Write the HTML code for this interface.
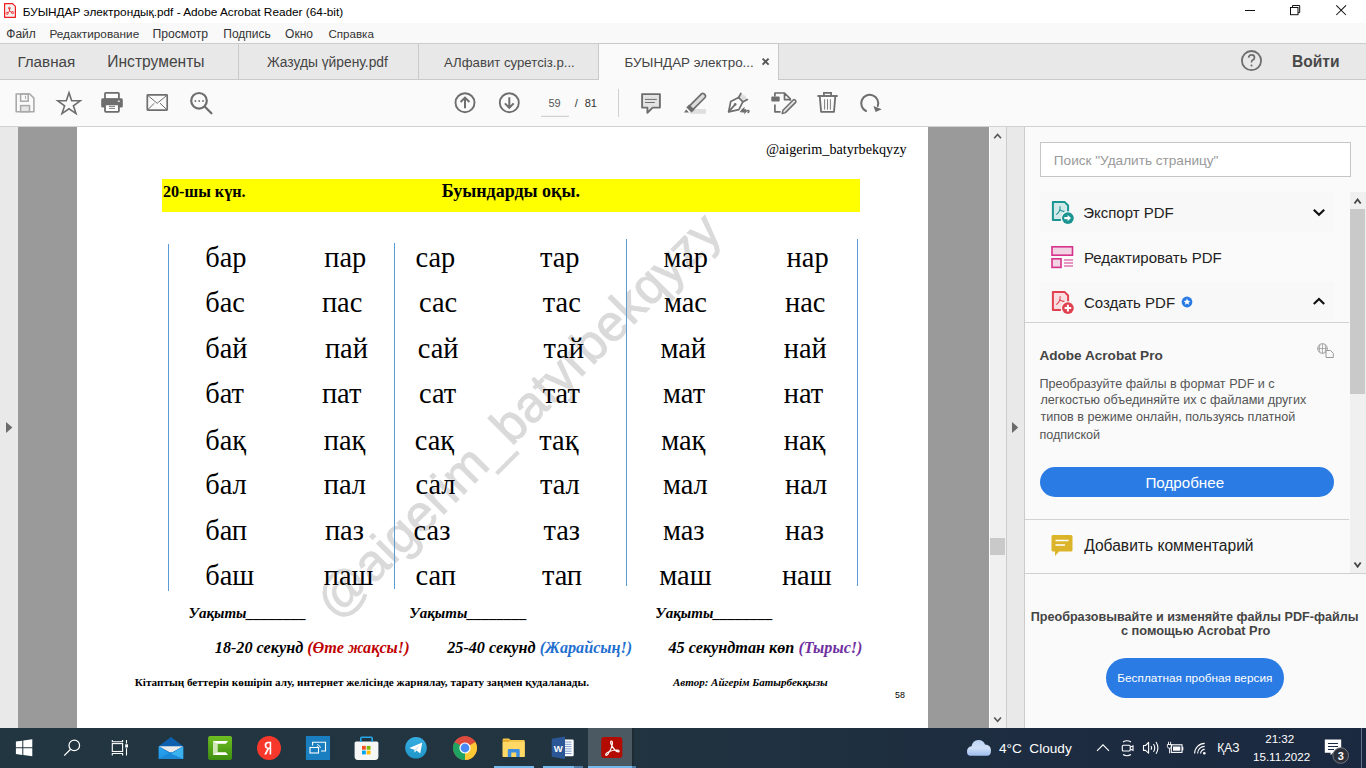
<!DOCTYPE html>
<html><head><meta charset="utf-8">
<style>
*{margin:0;padding:0;box-sizing:border-box}
html,body{width:1366px;height:768px;overflow:hidden;background:#fff;font-family:"Liberation Sans",sans-serif}
.a{position:absolute;white-space:nowrap}
svg{position:absolute;overflow:visible}
</style></head><body>
<!-- bars -->
<div class="a" style="left:0;top:0;width:1366px;height:23px;background:#fff"></div>
<div class="a" style="left:0;top:23px;width:1366px;height:20px;background:#f9f9f9"></div>
<div class="a" style="left:0;top:43px;width:1366px;height:1px;background:#cdcdcd"></div>
<div class="a" style="left:0;top:44px;width:1366px;height:35px;background:#e8e8e8"></div>
<div class="a" style="left:0;top:79px;width:1366px;height:1px;background:#c9c9c9"></div>
<div class="a" style="left:0;top:80px;width:1366px;height:46px;background:#fafafa"></div>
<div class="a" style="left:0;top:126px;width:1366px;height:1px;background:#d2d2d2"></div>
<!-- tab separators / active tab -->
<div class="a" style="left:238px;top:44px;width:1px;height:35px;background:#cacaca"></div>
<div class="a" style="left:418px;top:44px;width:1px;height:35px;background:#cacaca"></div>
<div class="a" style="left:598px;top:43px;width:181px;height:37px;background:#fafafa;border-left:1px solid #c9c9c9;border-right:1px solid #c9c9c9;border-top:1px solid #c9c9c9"></div>
<!-- doc area -->
<div class="a" style="left:0;top:127px;width:18px;height:601px;background:#e9e9e9"></div>
<div class="a" style="left:18px;top:127px;width:971px;height:601px;background:#9a9a9a"></div>
<div class="a" style="left:77px;top:127px;width:851px;height:601px;background:#fff"></div>
<div class="a" style="left:989px;top:127px;width:1px;height:601px;background:#fff"></div>
<div class="a" style="left:990px;top:127px;width:16px;height:601px;background:#f0f0f0"></div>
<div class="a" style="left:1006px;top:127px;width:1px;height:601px;background:#cbcbcb"></div>
<div class="a" style="left:1007px;top:127px;width:17px;height:601px;background:#e9e9e9"></div>
<div class="a" style="left:1024px;top:127px;width:1px;height:601px;background:#cbcbcb"></div>
<div class="a" style="left:1025px;top:127px;width:341px;height:601px;background:#fafafa"></div>
<div class="a" style="left:990px;top:538px;width:15px;height:17px;background:#c9c9c9"></div>
<svg style="left:0;top:0" width="1366" height="768">
 <path d="M6 422 L12.4 427.5 L6 433 Z" fill="#6b6b6b"/>
 <path d="M1012 422 L1018.2 427.5 L1012 433 Z" fill="#6b6b6b"/>
 <path d="M994.2 138.3 L997.6 134.5 L1001 138.3" fill="none" stroke="#555" stroke-width="1.6"/>
 <path d="M994.2 717.5 L997.6 721.3 L1001 717.5" fill="none" stroke="#555" stroke-width="1.6"/>
</svg>
<!-- panel -->
<div class="a" style="left:1040px;top:142px;width:311px;height:35px;background:#fff;border:1px solid #c6c6c6"></div>
<div class="a" style="left:1040px;top:192px;width:294px;height:40px;background:#f8f8f8"></div>
<div class="a" style="left:1040px;top:282px;width:294px;height:38px;background:#f8f8f8"></div>
<div class="a" style="left:1350px;top:192px;width:16px;height:381px;background:#f0f0f0"></div>
<div class="a" style="left:1350px;top:209px;width:15px;height:185px;background:#c9c9c9"></div>
<div class="a" style="left:1025px;top:322px;width:324px;height:1px;background:#d2d2d2"></div>
<div class="a" style="left:1025px;top:519px;width:324px;height:1px;background:#d2d2d2"></div>
<div class="a" style="left:1025px;top:573px;width:341px;height:1px;background:#cfcfcf"></div>
<div class="a" style="left:1040px;top:467px;width:294px;height:30px;background:#2b7be4;border-radius:15px"></div>
<div class="a" style="left:1106px;top:658px;width:178px;height:40px;background:#2b7be4;border-radius:20px"></div>
<svg style="left:0;top:0" width="1366" height="768">
 <path d="M1354.5 203.5 L1357.6 199.5 L1360.7 203.5" fill="none" stroke="#444" stroke-width="1.8"/>
 <path d="M1354.5 562.5 L1357.6 566.8 L1360.7 562.5" fill="none" stroke="#444" stroke-width="1.8"/>
 <path d="M1313.8 209.8 L1319 214.8 L1324.2 209.8" fill="none" stroke="#111" stroke-width="2.2"/>
 <path d="M1313.8 304 L1319 299 L1324.2 304" fill="none" stroke="#111" stroke-width="2.2"/>
 <!-- export icon -->
 <path d="M1052.9 201.9 H1064.5 L1068.1 205.5 V220 H1052.9 Z" fill="#d2e8e9"/><path d="M1068.1 212 V205.5 L1064.5 201.9 H1052.9 V220 H1060.9" fill="none" stroke="#1b9592" stroke-width="2" stroke-linejoin="round"/>
 <path d="M1060.1 206.2 Q1060.5 210 1058.8 212 Q1057.8 213.5 1056.3 214.6 M1060.4 210.2 Q1062 211.6 1064.4 211.4" fill="none" stroke="#1b9592" stroke-width="1.1"/>
 <circle cx="1067.9" cy="218.1" r="6.8" fill="#fafafa"/>
 <circle cx="1067.9" cy="218.1" r="5.9" fill="#1b9592"/>
 <path d="M1064.3 218.1 H1068.4" stroke="#fff" stroke-width="2.2"/>
 <path d="M1067.6 214.9 L1071 218.1 L1067.6 221.3 Z" fill="#fff"/>
 <!-- edit icon -->
 <rect x="1052" y="246.8" width="20.5" height="8.4" fill="#f2d3e3" stroke="#d6318b" stroke-width="1.6"/>
 <rect x="1052" y="258.8" width="9" height="8.6" fill="#f2d3e3" stroke="#d6318b" stroke-width="1.6"/>
 <path d="M1064 260 H1073 M1064 263 H1073 M1064 266 H1073" stroke="#d6318b" stroke-width="1"/>
 <!-- create icon -->
 <path d="M1052.9 291.9 H1064.5 L1068.1 295.5 V310 H1052.9 Z" fill="#f9dde0"/><path d="M1068.1 302 V295.5 L1064.5 291.9 H1052.9 V310 H1060.9" fill="none" stroke="#e0414e" stroke-width="2" stroke-linejoin="round"/>
 <path d="M1060.1 296.2 Q1060.5 300 1058.8 302 Q1057.8 303.5 1056.3 304.6 M1060.4 300.2 Q1062 301.6 1064.4 301.4" fill="none" stroke="#e0414e" stroke-width="1.1"/>
 <circle cx="1067.9" cy="308.1" r="6.8" fill="#fafafa"/>
 <circle cx="1067.9" cy="308.1" r="5.9" fill="#e0414e"/>
 <path d="M1064.6 308.1 H1071.2 M1067.9 304.8 V311.4" stroke="#fff" stroke-width="2"/>
 <circle cx="1187" cy="302" r="5.4" fill="#2b7be4"/>
 <path d="M1187 298.6 L1188 300.8 L1190.3 301 L1188.6 302.5 L1189.1 304.8 L1187 303.6 L1184.9 304.8 L1185.4 302.5 L1183.7 301 L1186 300.8 Z" fill="#fff"/>
 <!-- globe doc icon -->
 <circle cx="1322.5" cy="348.5" r="4.8" fill="none" stroke="#9a9a9a" stroke-width="1"/>
 <path d="M1317.7 348.5 H1327.3 M1322.5 343.7 V353.3 M1320 344.5 Q1318.5 348.5 1320 352.5 M1325 344.5 Q1326.5 348.5 1325 352.5" fill="none" stroke="#9a9a9a" stroke-width="0.8"/>
 <path d="M1326 350.5 H1330.5 L1333.3 353.3 V357.5 H1326 Z" fill="#fafafa" stroke="#9a9a9a" stroke-width="1"/>
 <!-- comment icon -->
 <path d="M1051.5 536.5 Q1051.5 535 1053 535 H1071 Q1072.5 535 1072.5 536.5 V550 Q1072.5 551.5 1071 551.5 H1059 L1055 556 V551.5 H1053 Q1051.5 551.5 1051.5 550 Z" fill="#dcb42a"/>
 <path d="M1055.5 540.5 H1068.5 M1055.5 545 H1065" stroke="#fff" stroke-width="1.4"/>
</svg>
<svg style="left:0;top:0" width="1366" height="130">
 <!-- title icon -->
 <path d="M4.6 3.6 H12.6 L15.4 6.4 V17.3 H4.6 Z" fill="#f3f3f3" stroke="#f01e1e" stroke-width="1.2" stroke-linejoin="round"/>
 <path d="M9.4 8.2 L9.6 11.2 M9.6 11.2 L7.4 13 M9.6 11.2 L12.5 12.6" stroke="#f01e1e" stroke-width="0.9" fill="none"/>
 <circle cx="9.4" cy="8.2" r="1" fill="none" stroke="#f01e1e" stroke-width="0.8"/>
 <circle cx="7.2" cy="13.3" r="1.1" fill="none" stroke="#f01e1e" stroke-width="0.8"/>
 <circle cx="12.6" cy="12.6" r="1.1" fill="none" stroke="#f01e1e" stroke-width="0.8"/>
 <!-- window controls -->
 <path d="M1245 10.5 H1255" stroke="#111" stroke-width="1"/>
 <rect x="1290.5" y="7.5" width="7.5" height="7.2" fill="none" stroke="#111" stroke-width="1"/>
 <path d="M1292.5 7.5 V5.5 H1299.7 V12.6 H1298" fill="none" stroke="#111" stroke-width="1"/>
 <path d="M1336.3 5.3 L1346 15 M1346 5.3 L1336.3 15" stroke="#111" stroke-width="1.05"/>
 <!-- help -->
 <circle cx="1251.5" cy="60.6" r="9.6" fill="none" stroke="#6e6e6e" stroke-width="1.8"/>
 <path d="M1248.6 57.8 Q1248.8 54.8 1251.6 54.8 Q1254.5 54.8 1254.5 57.4 Q1254.5 59.2 1252.6 60 Q1251.5 60.6 1251.5 62.4" fill="none" stroke="#6e6e6e" stroke-width="1.7"/>
 <circle cx="1251.5" cy="65.5" r="1.05" fill="#6e6e6e"/>
 <!-- tab close -->
 <path d="M762.6 58.6 L768.6 64.6 M768.6 58.6 L762.6 64.6" stroke="#555" stroke-width="1.9"/>
 <!-- save -->
 <path d="M16.2 94 H29.8 L33.9 98.1 V111.7 H16.2 Z" fill="none" stroke="#a9a9a9" stroke-width="1.6" stroke-linejoin="round"/>
 <rect x="20.6" y="94" width="7.6" height="7.2" fill="none" stroke="#a9a9a9" stroke-width="1.5"/>
 <path d="M25.5 95.8 V98.8" stroke="#a9a9a9" stroke-width="1.1"/>
 <rect x="20.6" y="105.6" width="8.9" height="6.1" fill="#e6e6e6" stroke="#a9a9a9" stroke-width="1.5"/>
 <!-- star -->
 <path d="M69 92.8 L71.7 100.8 L80.2 100.8 L73.4 105.8 L76 113.6 L69 108.8 L62 113.6 L64.6 105.8 L57.8 100.8 L66.3 100.8 Z" fill="none" stroke="#6e6e6e" stroke-width="1.6" stroke-linejoin="miter"/>
 <!-- printer -->
 <rect x="105" y="92.8" width="13.9" height="6.5" fill="#fff" stroke="#6e6e6e" stroke-width="1.8" rx="0.8"/>
 <rect x="101.2" y="98.2" width="21.6" height="9.3" fill="#6e6e6e" rx="1.5"/>
 <rect x="105" y="104.4" width="13.9" height="7.4" fill="#fff" stroke="#6e6e6e" stroke-width="1.8" rx="0.8"/>
 <path d="M109 106.4 H115 M109 108.4 H115" stroke="#6e6e6e" stroke-width="0.9"/>
 <rect x="117.8" y="100.6" width="2" height="1.2" fill="#fafafa"/>
 <!-- mail -->
 <rect x="147.3" y="94.9" width="19.9" height="15.2" fill="none" stroke="#6e6e6e" stroke-width="1.7" rx="0.6"/>
 <path d="M148 95.6 L157.2 103.3 L166.5 95.6 M148 109.4 L154.4 103.2 M166.5 109.4 L160 103.2" fill="none" stroke="#6e6e6e" stroke-width="1"/>
 <!-- search -->
 <circle cx="199" cy="100.8" r="7.8" fill="none" stroke="#6e6e6e" stroke-width="2.2"/>
 <path d="M204.9 106.7 L211.4 113.3" stroke="#6e6e6e" stroke-width="2.3" stroke-linecap="round"/>
 <circle cx="195.4" cy="101" r="0.9" fill="#6e6e6e"/><circle cx="199.2" cy="101" r="0.9" fill="#6e6e6e"/><circle cx="203" cy="101" r="0.9" fill="#6e6e6e"/>
 <!-- up / down -->
 <circle cx="465" cy="102.7" r="9.5" fill="none" stroke="#6e6e6e" stroke-width="1.9"/>
 <path d="M465 97.6 V108.2 M460.6 102 L465 97.6 L469.4 102" fill="none" stroke="#6e6e6e" stroke-width="2"/>
 <circle cx="509.3" cy="102.7" r="9.5" fill="none" stroke="#6e6e6e" stroke-width="1.9"/>
 <path d="M509.3 97.2 V107.8 M504.9 103.4 L509.3 107.8 L513.7 103.4" fill="none" stroke="#6e6e6e" stroke-width="2"/>
 <!-- page box underline + separator -->
 <path d="M541 116.3 H569" stroke="#c8c8c8" stroke-width="1"/>
 <path d="M618.5 89 V117" stroke="#d0d0d0" stroke-width="1"/>
 <!-- comment -->
 <path d="M642.1 94.1 H659.9 V107.6 H652.6 L647.4 112.8 V107.6 H642.1 Z" fill="#e3e3e3" stroke="#6e6e6e" stroke-width="1.9" stroke-linejoin="round"/>
 <path d="M645 99.4 H656.8 M645 102.5 H654.8" stroke="#6e6e6e" stroke-width="1"/>
 <!-- highlighter -->
 <rect x="689.8" y="109.1" width="16.2" height="4.7" fill="#dedede"/>
 <path d="M688.8 106.6 L701.5 93.9 Q702.8 92.8 704.1 93.9 L705.1 94.9 Q706.2 96.2 705.1 97.5 L692.4 110.2 Z" fill="#dcdcdc" stroke="#6e6e6e" stroke-width="1.7" stroke-linejoin="round"/>
 <path d="M687.5 107.4 L689.2 105.6 L693.4 109.8 L691.6 111.5 Z" fill="#6e6e6e" stroke="#6e6e6e" stroke-width="1.6"/>
 <path d="M684 112.6 L686.2 109.4 L689 112.6 Z" fill="#6e6e6e"/>
 <!-- pen sign -->
 <path d="M740.9 93.4 L745.5 96 L747.4 99.6 L742.8 101.9 L738.6 97.5 Z" fill="#dedede"/>
 <path d="M728.6 111.8 L730.7 101.6 L738.6 97.5 L742.8 101.9 L738.9 109.6 Z" fill="none" stroke="#6e6e6e" stroke-width="1.7" stroke-linejoin="round"/>
 <path d="M738.6 97.5 L740.9 93.4 M742.8 101.9 L747.4 99.6 M728.8 111.6 L735.2 104.4" fill="none" stroke="#6e6e6e" stroke-width="1.7" stroke-linecap="round"/>
 <circle cx="735.2" cy="104.4" r="1.3" fill="#6e6e6e"/>
 <path d="M740.6 112.3 Q742.6 109.2 743.6 108.6 L742.8 112.3 Q744.6 109.6 745.4 109.9 L745.1 112.1 Q747.1 110.1 748.6 110.6 Q749.6 111.6 747.6 112.9" fill="none" stroke="#6e6e6e" stroke-width="1.6"/>
 <!-- edit doc -->
 <path d="M774.9 96.4 V93 H784.5 L790.3 98.8 V100.8 M784.5 93 V99.6 H790.3 M774.9 104.4 V111.8 H780.6" fill="none" stroke="#6e6e6e" stroke-width="1.7" stroke-linejoin="round"/>
 <rect x="771.3" y="96.4" width="8.4" height="5.1" rx="1" fill="#6e6e6e"/>
 <path d="M782.2 113.6 L783 110.2 L793.2 100 Q794.2 99.2 795.1 100 L795.6 100.6 Q796.4 101.5 795.6 102.4 L785.4 112.6 Z" fill="#e6e6e6" stroke="#6e6e6e" stroke-width="1.5" stroke-linejoin="round"/>
 <!-- trash -->
 <path d="M817.4 96 H837.7" stroke="#6e6e6e" stroke-width="1.9"/>
 <path d="M823.9 95.8 V92.9 H831.1 V95.8" fill="none" stroke="#6e6e6e" stroke-width="1.7"/>
 <path d="M819.8 96.5 L821.1 111.9 H834 L835.3 96.5" fill="none" stroke="#6e6e6e" stroke-width="1.8" stroke-linejoin="round"/>
 <path d="M824.6 99.2 V109.6 M827.5 99.2 V109.6 M830.4 99.2 V109.6" stroke="#6e6e6e" stroke-width="0.9"/>
 <!-- rotate -->
 <path d="M866 111 A8.5 8.5 0 1 1 877.8 106" fill="none" stroke="#6e6e6e" stroke-width="2" stroke-linecap="round"/>
 <path d="M873.4 106.1 L881.8 109.3 L875.6 112 Z" fill="#6e6e6e"/>
</svg>

<!-- taskbar -->
<div class="a" style="left:0;top:728px;width:1366px;height:40px;background:linear-gradient(90deg,#223641 0%,#213440 45%,#1d2c40 75%,#1b2940 100%)"></div>
<div class="a" style="left:588px;top:728px;width:44px;height:40px;background:#4b5962"></div>
<div class="a" style="left:632px;top:728px;width:2px;height:40px;background:#1f2b33"></div>
<div class="a" style="left:494px;top:766px;width:40px;height:2px;background:#76b9ed"></div>
<div class="a" style="left:543px;top:766px;width:31px;height:2px;background:#76b9ed"></div>
<div class="a" style="left:574px;top:766px;width:9px;height:2px;background:#4f7fa8"></div>
<div class="a" style="left:588px;top:766px;width:44px;height:2px;background:#76b9ed"></div>
<div class="a" style="left:632px;top:766px;width:4px;height:2px;background:#4f7fa8"></div>
<div class="a" style="left:1361px;top:728px;width:1px;height:40px;background:#66708a"></div>
<svg style="left:0;top:0" width="1366" height="768">
 <defs>
  <linearGradient id="gm" x1="0" y1="0" x2="1" y2="1"><stop offset="0" stop-color="#2aa7f0"/><stop offset="1" stop-color="#1b86d8"/></linearGradient>
  <linearGradient id="gc" x1="0" y1="0" x2="0" y2="1"><stop offset="0" stop-color="#6fbf22"/><stop offset="1" stop-color="#3f8f10"/></linearGradient>
  <linearGradient id="gt" x1="0" y1="0" x2="0" y2="1"><stop offset="0" stop-color="#37aee2"/><stop offset="1" stop-color="#1e96c8"/></linearGradient>
  <linearGradient id="gcl" x1="0" y1="0" x2="0" y2="1"><stop offset="0" stop-color="#bcd3f5"/><stop offset="0.5" stop-color="#cfe0f7"/><stop offset="1" stop-color="#9dbcef"/></linearGradient>
 </defs>
 <!-- windows -->
 <path d="M15.9 741.6 L22.3 740.7 V747.3 H15.9 Z M23.3 740.5 L32.3 739.3 V747.3 H23.3 Z M15.9 748.3 H22.3 V754.9 L15.9 754 Z M23.3 748.3 H32.3 V756.3 L23.3 755.1 Z" fill="#fff"/>
 <!-- search -->
 <circle cx="74.3" cy="745.4" r="5.3" fill="none" stroke="#fff" stroke-width="1.2"/>
 <path d="M70.6 749.2 L64.2 755.6" stroke="#fff" stroke-width="1.3"/>
 <!-- task view -->
 <path d="M112.3 740 V741.7 H122.6 V740 M112.3 755.5 V753.5 H122.6 V755.5" fill="none" stroke="#fff" stroke-width="1.1"/>
 <rect x="112.3" y="743.6" width="10.3" height="7.9" fill="none" stroke="#fff" stroke-width="1.1"/>
 <path d="M126.5 740 V743.5 M126.5 748.3 V755.5" stroke="#fff" stroke-width="1.1"/>
 <rect x="125.2" y="744.3" width="2.8" height="3.2" fill="#fff"/>
 <!-- mail -->
 <path d="M158.7 746.2 L171 737 L183.2 746.2 V759 H158.7 Z" fill="#0d5fb0"/>
 <path d="M158.7 746.2 L183.2 746.2 L171 753 Z" fill="#eaeaea"/>
 <path d="M158.7 746.6 L171 753.8 L183.2 746.6 V759 H158.7 Z" fill="url(#gm)"/>
 <path d="M158.7 759 L171 752 L183.2 759 Z" fill="#1c89d6"/>
 <path d="M183.2 746.6 L171 753.8 L183.2 759 Z" fill="#46c0f3" opacity="0.7"/>
 <!-- camtasia -->
 <rect x="208.1" y="736" width="23.9" height="23.9" rx="2" fill="url(#gc)"/>
 <path d="M213 741 H228 L225.8 743.8 H217.4 V752.2 H225.8 L228 755 H213 Z" fill="#fff"/>
 <path d="M213 741 L217.4 743.8 V752.2 L213 755 Z" fill="#cfe8b8"/>
 <!-- yandex -->
 <circle cx="269" cy="748" r="12" fill="#f7382b"/>
 <path d="M271.2 741.8 H268.2 Q264.6 741.8 264.6 745.4 Q264.6 748 267.2 748.8 L264.2 754.6 H266.3 L269 749.1 H269.6 V754.6 H271.2 Z M269.6 743.3 V747.6 H268.4 Q266.4 747.6 266.4 745.4 Q266.4 743.3 268.4 743.3 Z" fill="#fff" fill-rule="evenodd"/>
 <!-- connect -->
 <rect x="305.9" y="736" width="24.1" height="24" fill="#1a7fc0"/>
 <path d="M312.6 745.4 V742.2 H325.5 V751 H321" fill="none" stroke="#fff" stroke-width="1.1"/>
 <rect x="310" y="747.5" width="8.5" height="5.5" fill="none" stroke="#fff" stroke-width="1.1"/>
 <path d="M317 744.5 Q320 745 320.5 748 M317 746.5 Q318.6 746.8 318.8 748.3" fill="none" stroke="#fff" stroke-width="0.9"/>
 <!-- store -->
 <path d="M356.2 741.5 H376.8 Q378.4 741.5 378.4 743.1 V756.8 Q378.4 759.9 375.3 759.9 H357.7 Q354.6 759.9 354.6 756.8 V743.1 Q354.6 741.5 356.2 741.5 Z" fill="#f6f6f6"/>
 <path d="M360.8 742 V738.2 Q360.8 737.3 361.8 737.3 H371.2 Q372.2 737.3 372.2 738.2 V742" fill="none" stroke="#26a8ea" stroke-width="1.6"/>
 <rect x="362" y="745.9" width="3.8" height="3.8" fill="#f25022"/><rect x="366.7" y="745.9" width="3.8" height="3.8" fill="#7fba00"/>
 <rect x="362" y="750.6" width="3.8" height="3.8" fill="#00a4ef"/><rect x="366.7" y="750.6" width="3.8" height="3.8" fill="#ffb900"/>
 <!-- telegram -->
 <circle cx="416" cy="747.8" r="10.8" fill="url(#gt)"/>
 <path d="M409.3 748 L422.3 742.6 L420.2 753.4 L416.6 750.6 L414.6 752.6 L414.4 749.7 Z" fill="#fff"/>
 <path d="M414.4 749.7 L420.5 744.8 L415.5 750.4 Z" fill="#c8daea"/>
 <!-- chrome -->
 <circle cx="465" cy="748" r="12" fill="#dd4b3e"/>
 <path d="M465 748 L475.4 742 A12 12 0 0 1 465 760 Z" fill="#fcc934"/>
 <path d="M465 748 L465 760 A12 12 0 0 1 454.6 742 Z" fill="#1ea362"/>
 <circle cx="465" cy="748" r="5.6" fill="#fff"/>
 <circle cx="465" cy="748" r="4.4" fill="#4a8af4"/>
 <!-- explorer -->
 <path d="M502.7 739.5 Q502.7 738.5 503.7 738.5 H509 L510.5 740 H524 Q524.7 740 524.7 740.8 V756.2 Q524.7 757 524 757 H503.5 Q502.7 757 502.7 756.2 Z" fill="#f5c84c"/>
 <path d="M502.7 742 H524.7 V756.2 Q524.7 757 524 757 H503.5 Q502.7 757 502.7 756.2 Z" fill="#ffd866"/>
 <path d="M502.7 740 H510 L508.8 741.8 H502.7 Z" fill="#e5a72a"/>
 <path d="M507.8 757 V750.2 Q507.8 749 509 749 H518.5 Q519.7 749 519.7 750.2 V757 H516.2 V752.5 H511.3 V757 Z" fill="#3d8ee0"/>
 <!-- word -->
 <path d="M559 739.5 H572.5 Q573.7 739.5 573.7 740.7 V755 Q573.7 756.2 572.5 756.2 H559 Z" fill="#fff"/>
 <path d="M563 742 H571.5 M563 744.3 H571.5 M563 746.6 H571.5 M563 748.9 H571.5 M563 751.2 H571.5 M563 753.5 H571.5" stroke="#7a9ccf" stroke-width="1"/>
 <path d="M551.7 738.8 L565 736.5 V759 L551.7 756.8 Z" fill="#2b5797"/>
 <text x="558.3" y="751.8" font-family="Liberation Sans" font-size="9.5" font-weight="bold" fill="#fff" text-anchor="middle">W</text>
 <!-- acrobat -->
 <rect x="601.2" y="737.1" width="21.1" height="20.9" rx="3" fill="#b30b00"/>
 <path d="M611.3 741 Q612.8 741 612.3 744.5 Q611.6 748.5 608.2 753.8 Q606.2 756.2 605.7 754.8 Q605.4 753.5 609.5 751.5 Q614.5 749.5 618.2 750.2 Q619.8 750.8 618.8 751.8 Q617.5 752.5 614.8 750 Q611.8 746.5 610.8 743.5 Q610.4 741 611.3 741 Z" fill="none" stroke="#fff" stroke-width="1.2"/>
 <!-- cloud -->
 <path d="M970.5 755.8 Q967 755.8 967 751.5 Q967 747 971.5 746.3 Q972.5 740.3 978.5 740 Q983.5 740 985 744.6 Q991 745.2 991 750.5 Q991 755.8 987 755.8 Z" fill="url(#gcl)"/>
 <!-- chevron -->
 <path d="M1097 750.9 L1103 744.8 L1109 750.9" fill="none" stroke="#fff" stroke-width="1.1"/>
 <!-- meet -->
 <rect x="1122.3" y="745.2" width="7.9" height="5.8" rx="1" fill="none" stroke="#fff" stroke-width="1.1"/>
 <path d="M1130.2 747.2 L1133 745.8 V750.4 L1130.2 749" fill="none" stroke="#fff" stroke-width="1.1"/>
 <path d="M1123 742 Q1127 739.5 1131 742 M1123 754.5 Q1127 757 1131 754.5" fill="none" stroke="#fff" stroke-width="1.1"/>
 <!-- volume -->
 <path d="M1143.5 745.5 H1145.5 L1148.6 742.4 V753.2 L1145.5 750.4 H1143.5 Z" fill="none" stroke="#fff" stroke-width="1.1" stroke-linejoin="round"/>
 <path d="M1151 746 Q1152.3 747.9 1151 749.8 M1153.5 744 Q1156 747.9 1153.5 751.8 M1156 742 Q1159.8 747.9 1156 753.8" fill="none" stroke="#fff" stroke-width="1.1"/>
 <!-- battery -->
 <rect x="1171.3" y="744.8" width="10.7" height="7.6" fill="none" stroke="#fff" stroke-width="1.1"/>
 <rect x="1173" y="746.5" width="7.3" height="4.2" fill="#fff"/>
 <rect x="1182" y="746.8" width="1.3" height="3.6" fill="#fff"/>
 <path d="M1168.5 741.8 V744.5 M1170.6 741.8 V744.5 M1167.4 744.5 H1171.7 V746.5 Q1171.7 748.3 1169.5 748.3 Q1167.4 748.3 1167.4 746.5 Z M1169.5 748.3 V753.3" fill="none" stroke="#fff" stroke-width="0.9"/>
 <!-- wifi -->
 <path d="M1194.6 753.5 A10.1 10.1 0 0 1 1204.7 743.4 M1197.6 753.5 A7.1 7.1 0 0 1 1204.7 746.4 M1200.6 753.5 A4.1 4.1 0 0 1 1204.7 749.4" fill="none" stroke="#fff" stroke-width="1.1"/>
 <circle cx="1204.3" cy="753.2" r="1.3" fill="#fff"/>
 <!-- notification -->
 <path d="M1324.8 739.6 H1341.2 V752.8 H1333 L1330.6 755.2 V752.8 H1324.8 Z" fill="#fff"/>
 <path d="M1328 743.5 H1338 M1328 746.5 H1338 M1328 749.5 H1334" stroke="#1b2940" stroke-width="1"/>
 <circle cx="1340.7" cy="755.5" r="7.8" fill="#2d3038" stroke="#7c8088" stroke-width="0.9"/>
 <text x="1340.8" y="759.5" font-family="Liberation Sans" font-size="11" font-weight="bold" fill="#fff" text-anchor="middle">3</text>
</svg>

<div class="a" style="left:162px;top:179px;width:698px;height:33px;background:#ff0"></div>
<div class="a" style="left:332px;top:617px;font-family:'Liberation Sans';font-size:51px;line-height:1;color:#dadada;-webkit-text-stroke:0.9px #dadada;transform-origin:0 0;transform:rotate(-45deg) translate(0,-36.5px)">@aigerim_batyrbekqyzy</div>

<div class="a" style="left:22.7px;top:6.8px;font-family:'Liberation Sans';font-weight:normal;font-style:normal;font-size:11.8px;line-height:1;color:#000;">БУЫНДАР электрондық.pdf - Adobe Acrobat Reader (64-bit)</div>
<div class="a" style="left:6.3px;top:27.5px;font-family:'Liberation Sans';font-weight:normal;font-style:normal;font-size:12px;line-height:1;color:#333;">Файл</div>
<div class="a" style="left:49.4px;top:28.5px;font-family:'Liberation Sans';font-weight:normal;font-style:normal;font-size:11.8px;line-height:1;color:#333;">Редактирование</div>
<div class="a" style="left:152.4px;top:27.5px;font-family:'Liberation Sans';font-weight:normal;font-style:normal;font-size:12.2px;line-height:1;color:#333;">Просмотр</div>
<div class="a" style="left:223.3px;top:27.5px;font-family:'Liberation Sans';font-weight:normal;font-style:normal;font-size:12px;line-height:1;color:#333;">Подпись</div>
<div class="a" style="left:285.1px;top:27.5px;font-family:'Liberation Sans';font-weight:normal;font-style:normal;font-size:12px;line-height:1;color:#333;">Окно</div>
<div class="a" style="left:328.4px;top:27.5px;font-family:'Liberation Sans';font-weight:normal;font-style:normal;font-size:11.6px;line-height:1;color:#333;">Справка</div>
<div class="a" style="left:17.4px;top:54.0px;font-family:'Liberation Sans';font-weight:normal;font-style:normal;font-size:15.2px;line-height:1;color:#444;">Главная</div>
<div class="a" style="left:107.3px;top:54.0px;font-family:'Liberation Sans';font-weight:normal;font-style:normal;font-size:15.6px;line-height:1;color:#444;">Инструменты</div>
<div class="a" style="left:266.9px;top:56.0px;font-family:'Liberation Sans';font-weight:normal;font-style:normal;font-size:13.8px;line-height:1;color:#444;">Жазуды үйрену.pdf</div>
<div class="a" style="left:444.0px;top:56.0px;font-family:'Liberation Sans';font-weight:normal;font-style:normal;font-size:13.2px;line-height:1;color:#444;">АЛфавит суретсіз.p...</div>
<div class="a" style="left:624.6px;top:56.1px;font-family:'Liberation Sans';font-weight:normal;font-style:normal;font-size:13.4px;line-height:1;color:#444;">БУЫНДАР электро...</div>
<div class="a" style="left:1292.0px;top:54.0px;font-family:'Liberation Sans';font-weight:bold;font-style:normal;font-size:15.6px;line-height:1;color:#484848;">Войти</div>
<div class="a" style="left:548.5px;top:98.1px;font-family:'Liberation Sans';font-weight:normal;font-style:normal;font-size:11px;line-height:1;color:#555;">59</div>
<div class="a" style="left:574.7px;top:98.1px;font-family:'Liberation Sans';font-weight:normal;font-style:normal;font-size:11px;line-height:1;color:#333;">/</div>
<div class="a" style="left:584.7px;top:98.1px;font-family:'Liberation Sans';font-weight:normal;font-style:normal;font-size:11px;line-height:1;color:#333;">81</div>
<div class="a" style="left:1053.8px;top:154.1px;font-family:'Liberation Sans';font-weight:normal;font-style:normal;font-size:13.6px;line-height:1;color:#999;">Поиск "Удалить страницу"</div>
<div class="a" style="left:1083.2px;top:204.7px;font-family:'Liberation Sans';font-weight:normal;font-style:normal;font-size:15px;line-height:1;color:#222;">Экспорт PDF</div>
<div class="a" style="left:1083.9px;top:250.0px;font-family:'Liberation Sans';font-weight:normal;font-style:normal;font-size:15px;line-height:1;color:#222;">Редактировать PDF</div>
<div class="a" style="left:1083.9px;top:295.1px;font-family:'Liberation Sans';font-weight:normal;font-style:normal;font-size:15px;line-height:1;color:#222;">Создать PDF</div>
<div class="a" style="left:1039.4px;top:348.7px;font-family:'Liberation Sans';font-weight:bold;font-style:normal;font-size:13.6px;line-height:1;color:#444;">Adobe Acrobat Pro</div>
<div class="a" style="left:1039.4px;top:377.5px;font-family:'Liberation Sans';font-weight:normal;font-style:normal;font-size:12.6px;line-height:1;color:#555;">Преобразуйте файлы в формат PDF и с</div>
<div class="a" style="left:1040.4px;top:394.2px;font-family:'Liberation Sans';font-weight:normal;font-style:normal;font-size:12.6px;line-height:1;color:#555;">легкостью объединяйте их с файлами других</div>
<div class="a" style="left:1040.4px;top:411.4px;font-family:'Liberation Sans';font-weight:normal;font-style:normal;font-size:12.6px;line-height:1;color:#555;">типов в режиме онлайн, пользуясь платной</div>
<div class="a" style="left:1039.4px;top:428.6px;font-family:'Liberation Sans';font-weight:normal;font-style:normal;font-size:12.6px;line-height:1;color:#555;">подпиской</div>
<div class="a" style="left:1145.4px;top:475.0px;font-family:'Liberation Sans';font-weight:normal;font-style:normal;font-size:15.2px;line-height:1;color:#fff;">Подробнее</div>
<div class="a" style="left:1084.2px;top:538.4px;font-family:'Liberation Sans';font-weight:normal;font-style:normal;font-size:15.6px;line-height:1;color:#222;">Добавить комментарий</div>
<div class="a" style="left:1030.7px;top:610.6px;font-family:'Liberation Sans';font-weight:bold;font-style:normal;font-size:12.6px;line-height:1;color:#444;">Преобразовывайте и изменяйте файлы PDF-файлы</div>
<div class="a" style="left:1120.9px;top:624.8px;font-family:'Liberation Sans';font-weight:bold;font-style:normal;font-size:12.8px;line-height:1;color:#444;">с помощью Acrobat Pro</div>
<div class="a" style="left:1117.3px;top:672.9px;font-family:'Liberation Sans';font-weight:normal;font-style:normal;font-size:11.8px;line-height:1;color:#fff;">Бесплатная пробная версия</div>
<div class="a" style="left:999.0px;top:741.6px;font-family:'Liberation Sans';font-weight:normal;font-style:normal;font-size:13.6px;line-height:1;color:#fff;">4°C&nbsp; Cloudy</div>
<div class="a" style="left:1217.3px;top:742.0px;font-family:'Liberation Sans';font-weight:normal;font-style:normal;font-size:12px;line-height:1;color:#fff;">ҚАЗ</div>
<div class="a" style="left:1265.2px;top:733.0px;font-family:'Liberation Sans';font-weight:normal;font-style:normal;font-size:11.6px;line-height:1;color:#fff;">21:32</div>
<div class="a" style="left:1253.0px;top:750.9px;font-family:'Liberation Sans';font-weight:normal;font-style:normal;font-size:11.6px;line-height:1;color:#fff;">15.11.2022</div>
<div class="a" style="left:205.2px;top:243.8px;font-family:'Liberation Serif';font-weight:normal;font-style:normal;font-size:28.4px;line-height:1;color:#000;text-shadow:0 0 1px #fff,0 0 2px #fff;">бар</div>
<div class="a" style="left:205.2px;top:288.9px;font-family:'Liberation Serif';font-weight:normal;font-style:normal;font-size:28.4px;line-height:1;color:#000;text-shadow:0 0 1px #fff,0 0 2px #fff;">бас</div>
<div class="a" style="left:205.2px;top:334.6px;font-family:'Liberation Serif';font-weight:normal;font-style:normal;font-size:28.4px;line-height:1;color:#000;text-shadow:0 0 1px #fff,0 0 2px #fff;">бай</div>
<div class="a" style="left:205.2px;top:379.6px;font-family:'Liberation Serif';font-weight:normal;font-style:normal;font-size:28.4px;line-height:1;color:#000;text-shadow:0 0 1px #fff,0 0 2px #fff;">бат</div>
<div class="a" style="left:205.2px;top:426.6px;font-family:'Liberation Serif';font-weight:normal;font-style:normal;font-size:28.4px;line-height:1;color:#000;text-shadow:0 0 1px #fff,0 0 2px #fff;">бақ</div>
<div class="a" style="left:205.2px;top:471.2px;font-family:'Liberation Serif';font-weight:normal;font-style:normal;font-size:28.4px;line-height:1;color:#000;text-shadow:0 0 1px #fff,0 0 2px #fff;">бал</div>
<div class="a" style="left:205.2px;top:516.9px;font-family:'Liberation Serif';font-weight:normal;font-style:normal;font-size:28.4px;line-height:1;color:#000;text-shadow:0 0 1px #fff,0 0 2px #fff;">бап</div>
<div class="a" style="left:205.2px;top:562.0px;font-family:'Liberation Serif';font-weight:normal;font-style:normal;font-size:28.4px;line-height:1;color:#000;text-shadow:0 0 1px #fff,0 0 2px #fff;">баш</div>
<div class="a" style="left:324.2px;top:243.8px;font-family:'Liberation Serif';font-weight:normal;font-style:normal;font-size:28.4px;line-height:1;color:#000;text-shadow:0 0 1px #fff,0 0 2px #fff;">пар</div>
<div class="a" style="left:321.9px;top:288.9px;font-family:'Liberation Serif';font-weight:normal;font-style:normal;font-size:28.4px;line-height:1;color:#000;text-shadow:0 0 1px #fff,0 0 2px #fff;">пас</div>
<div class="a" style="left:324.9px;top:334.6px;font-family:'Liberation Serif';font-weight:normal;font-style:normal;font-size:28.4px;line-height:1;color:#000;text-shadow:0 0 1px #fff,0 0 2px #fff;">пай</div>
<div class="a" style="left:321.9px;top:379.6px;font-family:'Liberation Serif';font-weight:normal;font-style:normal;font-size:28.4px;line-height:1;color:#000;text-shadow:0 0 1px #fff,0 0 2px #fff;">пат</div>
<div class="a" style="left:323.8px;top:426.6px;font-family:'Liberation Serif';font-weight:normal;font-style:normal;font-size:28.4px;line-height:1;color:#000;text-shadow:0 0 1px #fff,0 0 2px #fff;">пақ</div>
<div class="a" style="left:323.8px;top:471.2px;font-family:'Liberation Serif';font-weight:normal;font-style:normal;font-size:28.4px;line-height:1;color:#000;text-shadow:0 0 1px #fff,0 0 2px #fff;">пал</div>
<div class="a" style="left:324.9px;top:516.9px;font-family:'Liberation Serif';font-weight:normal;font-style:normal;font-size:28.4px;line-height:1;color:#000;text-shadow:0 0 1px #fff,0 0 2px #fff;">паз</div>
<div class="a" style="left:323.8px;top:562.0px;font-family:'Liberation Serif';font-weight:normal;font-style:normal;font-size:28.4px;line-height:1;color:#000;text-shadow:0 0 1px #fff,0 0 2px #fff;">паш</div>
<div class="a" style="left:415.5px;top:243.8px;font-family:'Liberation Serif';font-weight:normal;font-style:normal;font-size:28.4px;line-height:1;color:#000;text-shadow:0 0 1px #fff,0 0 2px #fff;">сар</div>
<div class="a" style="left:419.0px;top:288.9px;font-family:'Liberation Serif';font-weight:normal;font-style:normal;font-size:28.4px;line-height:1;color:#000;text-shadow:0 0 1px #fff,0 0 2px #fff;">сас</div>
<div class="a" style="left:417.8px;top:334.6px;font-family:'Liberation Serif';font-weight:normal;font-style:normal;font-size:28.4px;line-height:1;color:#000;text-shadow:0 0 1px #fff,0 0 2px #fff;">сай</div>
<div class="a" style="left:419.0px;top:379.6px;font-family:'Liberation Serif';font-weight:normal;font-style:normal;font-size:28.4px;line-height:1;color:#000;text-shadow:0 0 1px #fff,0 0 2px #fff;">сат</div>
<div class="a" style="left:414.8px;top:426.6px;font-family:'Liberation Serif';font-weight:normal;font-style:normal;font-size:28.4px;line-height:1;color:#000;text-shadow:0 0 1px #fff,0 0 2px #fff;">сақ</div>
<div class="a" style="left:415.5px;top:471.2px;font-family:'Liberation Serif';font-weight:normal;font-style:normal;font-size:28.4px;line-height:1;color:#000;text-shadow:0 0 1px #fff,0 0 2px #fff;">сал</div>
<div class="a" style="left:413.6px;top:516.9px;font-family:'Liberation Serif';font-weight:normal;font-style:normal;font-size:28.4px;line-height:1;color:#000;text-shadow:0 0 1px #fff,0 0 2px #fff;">саз</div>
<div class="a" style="left:415.5px;top:562.0px;font-family:'Liberation Serif';font-weight:normal;font-style:normal;font-size:28.4px;line-height:1;color:#000;text-shadow:0 0 1px #fff,0 0 2px #fff;">сап</div>
<div class="a" style="left:540.0px;top:243.8px;font-family:'Liberation Serif';font-weight:normal;font-style:normal;font-size:28.4px;line-height:1;color:#000;text-shadow:0 0 1px #fff,0 0 2px #fff;">тар</div>
<div class="a" style="left:542.8px;top:288.9px;font-family:'Liberation Serif';font-weight:normal;font-style:normal;font-size:28.4px;line-height:1;color:#000;text-shadow:0 0 1px #fff,0 0 2px #fff;">тас</div>
<div class="a" style="left:543.5px;top:334.6px;font-family:'Liberation Serif';font-weight:normal;font-style:normal;font-size:28.4px;line-height:1;color:#000;text-shadow:0 0 1px #fff,0 0 2px #fff;">тай</div>
<div class="a" style="left:542.8px;top:379.6px;font-family:'Liberation Serif';font-weight:normal;font-style:normal;font-size:28.4px;line-height:1;color:#000;text-shadow:0 0 1px #fff,0 0 2px #fff;">тат</div>
<div class="a" style="left:539.3px;top:426.6px;font-family:'Liberation Serif';font-weight:normal;font-style:normal;font-size:28.4px;line-height:1;color:#000;text-shadow:0 0 1px #fff,0 0 2px #fff;">тақ</div>
<div class="a" style="left:540.0px;top:471.2px;font-family:'Liberation Serif';font-weight:normal;font-style:normal;font-size:28.4px;line-height:1;color:#000;text-shadow:0 0 1px #fff,0 0 2px #fff;">тал</div>
<div class="a" style="left:543.5px;top:516.9px;font-family:'Liberation Serif';font-weight:normal;font-style:normal;font-size:28.4px;line-height:1;color:#000;text-shadow:0 0 1px #fff,0 0 2px #fff;">таз</div>
<div class="a" style="left:541.9px;top:562.0px;font-family:'Liberation Serif';font-weight:normal;font-style:normal;font-size:28.4px;line-height:1;color:#000;text-shadow:0 0 1px #fff,0 0 2px #fff;">тап</div>
<div class="a" style="left:663.5px;top:243.8px;font-family:'Liberation Serif';font-weight:normal;font-style:normal;font-size:28.4px;line-height:1;color:#000;text-shadow:0 0 1px #fff,0 0 2px #fff;">мар</div>
<div class="a" style="left:664.0px;top:288.9px;font-family:'Liberation Serif';font-weight:normal;font-style:normal;font-size:28.4px;line-height:1;color:#000;text-shadow:0 0 1px #fff,0 0 2px #fff;">мас</div>
<div class="a" style="left:660.5px;top:334.6px;font-family:'Liberation Serif';font-weight:normal;font-style:normal;font-size:28.4px;line-height:1;color:#000;text-shadow:0 0 1px #fff,0 0 2px #fff;">май</div>
<div class="a" style="left:663.0px;top:379.6px;font-family:'Liberation Serif';font-weight:normal;font-style:normal;font-size:28.4px;line-height:1;color:#000;text-shadow:0 0 1px #fff,0 0 2px #fff;">мат</div>
<div class="a" style="left:661.2px;top:426.6px;font-family:'Liberation Serif';font-weight:normal;font-style:normal;font-size:28.4px;line-height:1;color:#000;text-shadow:0 0 1px #fff,0 0 2px #fff;">мақ</div>
<div class="a" style="left:663.0px;top:471.2px;font-family:'Liberation Serif';font-weight:normal;font-style:normal;font-size:28.4px;line-height:1;color:#000;text-shadow:0 0 1px #fff,0 0 2px #fff;">мал</div>
<div class="a" style="left:663.0px;top:516.9px;font-family:'Liberation Serif';font-weight:normal;font-style:normal;font-size:28.4px;line-height:1;color:#000;text-shadow:0 0 1px #fff,0 0 2px #fff;">маз</div>
<div class="a" style="left:659.3px;top:562.0px;font-family:'Liberation Serif';font-weight:normal;font-style:normal;font-size:28.4px;line-height:1;color:#000;text-shadow:0 0 1px #fff,0 0 2px #fff;">маш</div>
<div class="a" style="left:786.6px;top:243.8px;font-family:'Liberation Serif';font-weight:normal;font-style:normal;font-size:28.4px;line-height:1;color:#000;text-shadow:0 0 1px #fff,0 0 2px #fff;">нар</div>
<div class="a" style="left:785.0px;top:288.9px;font-family:'Liberation Serif';font-weight:normal;font-style:normal;font-size:28.4px;line-height:1;color:#000;text-shadow:0 0 1px #fff,0 0 2px #fff;">нас</div>
<div class="a" style="left:783.8px;top:334.6px;font-family:'Liberation Serif';font-weight:normal;font-style:normal;font-size:28.4px;line-height:1;color:#000;text-shadow:0 0 1px #fff,0 0 2px #fff;">най</div>
<div class="a" style="left:783.8px;top:379.6px;font-family:'Liberation Serif';font-weight:normal;font-style:normal;font-size:28.4px;line-height:1;color:#000;text-shadow:0 0 1px #fff,0 0 2px #fff;">нат</div>
<div class="a" style="left:783.8px;top:426.6px;font-family:'Liberation Serif';font-weight:normal;font-style:normal;font-size:28.4px;line-height:1;color:#000;text-shadow:0 0 1px #fff,0 0 2px #fff;">нақ</div>
<div class="a" style="left:785.0px;top:471.2px;font-family:'Liberation Serif';font-weight:normal;font-style:normal;font-size:28.4px;line-height:1;color:#000;text-shadow:0 0 1px #fff,0 0 2px #fff;">нал</div>
<div class="a" style="left:785.0px;top:516.9px;font-family:'Liberation Serif';font-weight:normal;font-style:normal;font-size:28.4px;line-height:1;color:#000;text-shadow:0 0 1px #fff,0 0 2px #fff;">наз</div>
<div class="a" style="left:781.9px;top:562.0px;font-family:'Liberation Serif';font-weight:normal;font-style:normal;font-size:28.4px;line-height:1;color:#000;text-shadow:0 0 1px #fff,0 0 2px #fff;">наш</div>
<div class="a" style="left:162.9px;top:184.1px;font-family:'Liberation Serif';font-weight:bold;font-style:normal;font-size:16.2px;line-height:1;color:#000;">20-шы күн.</div>
<div class="a" style="left:441.7px;top:181.9px;font-family:'Liberation Serif';font-weight:bold;font-style:normal;font-size:18px;line-height:1;color:#000;">Буындарды оқы.</div>
<div class="a" style="left:765.9px;top:142.1px;font-family:'Liberation Serif';font-weight:normal;font-style:normal;font-size:14.2px;line-height:1;color:#000;">@aigerim_batyrbekqyzy</div>
<div class="a" style="left:188.5px;top:606.2px;font-family:'Liberation Serif';font-weight:bold;font-style:italic;font-size:15px;line-height:1;color:#000;">Уақыты________</div>
<div class="a" style="left:409.3px;top:606.2px;font-family:'Liberation Serif';font-weight:bold;font-style:italic;font-size:15px;line-height:1;color:#000;">Уақыты________</div>
<div class="a" style="left:655.3px;top:606.2px;font-family:'Liberation Serif';font-weight:bold;font-style:italic;font-size:15px;line-height:1;color:#000;">Уақыты________</div>
<div class="a" style="left:214.8px;top:640.0px;font-family:'Liberation Serif';font-weight:bold;font-style:italic;font-size:16.2px;line-height:1;color:#000;">18-20 секунд <span style="color:#c00000">(Өте жақсы!)</span></div>
<div class="a" style="left:447.2px;top:640.0px;font-family:'Liberation Serif';font-weight:bold;font-style:italic;font-size:16.2px;line-height:1;color:#000;">25-40 секунд <span style="color:#1f6fd0">(Жарайсың!)</span></div>
<div class="a" style="left:668.5px;top:640.0px;font-family:'Liberation Serif';font-weight:bold;font-style:italic;font-size:16.2px;line-height:1;color:#000;">45 секундтан көп <span style="color:#7030a0">(Тырыс!)</span></div>
<div class="a" style="left:134.7px;top:677.2px;font-family:'Liberation Serif';font-weight:bold;font-style:normal;font-size:11.2px;line-height:1;color:#000;">Кітаптың беттерін көшіріп алу, интернет желісінде жарнялау, тарату заңмен қудаланады.</div>
<div class="a" style="left:673.0px;top:677.2px;font-family:'Liberation Serif';font-weight:bold;font-style:italic;font-size:11px;line-height:1;color:#000;">Автор: Айгерім Батырбекқызы</div>
<div class="a" style="left:895.0px;top:690.6px;font-family:'Liberation Sans';font-weight:normal;font-style:normal;font-size:8.8px;line-height:1;color:#000;">58</div>
<div class="a" style="left:168.0px;top:244px;width:1px;height:347.0px;background:#5b9bd5"></div>
<div class="a" style="left:394.0px;top:242.5px;width:1px;height:346.0px;background:#5b9bd5"></div>
<div class="a" style="left:625.7px;top:238.5px;width:1px;height:347.5px;background:#5b9bd5"></div>
<div class="a" style="left:856.7px;top:238.5px;width:1px;height:347.5px;background:#5b9bd5"></div>
</body></html>
